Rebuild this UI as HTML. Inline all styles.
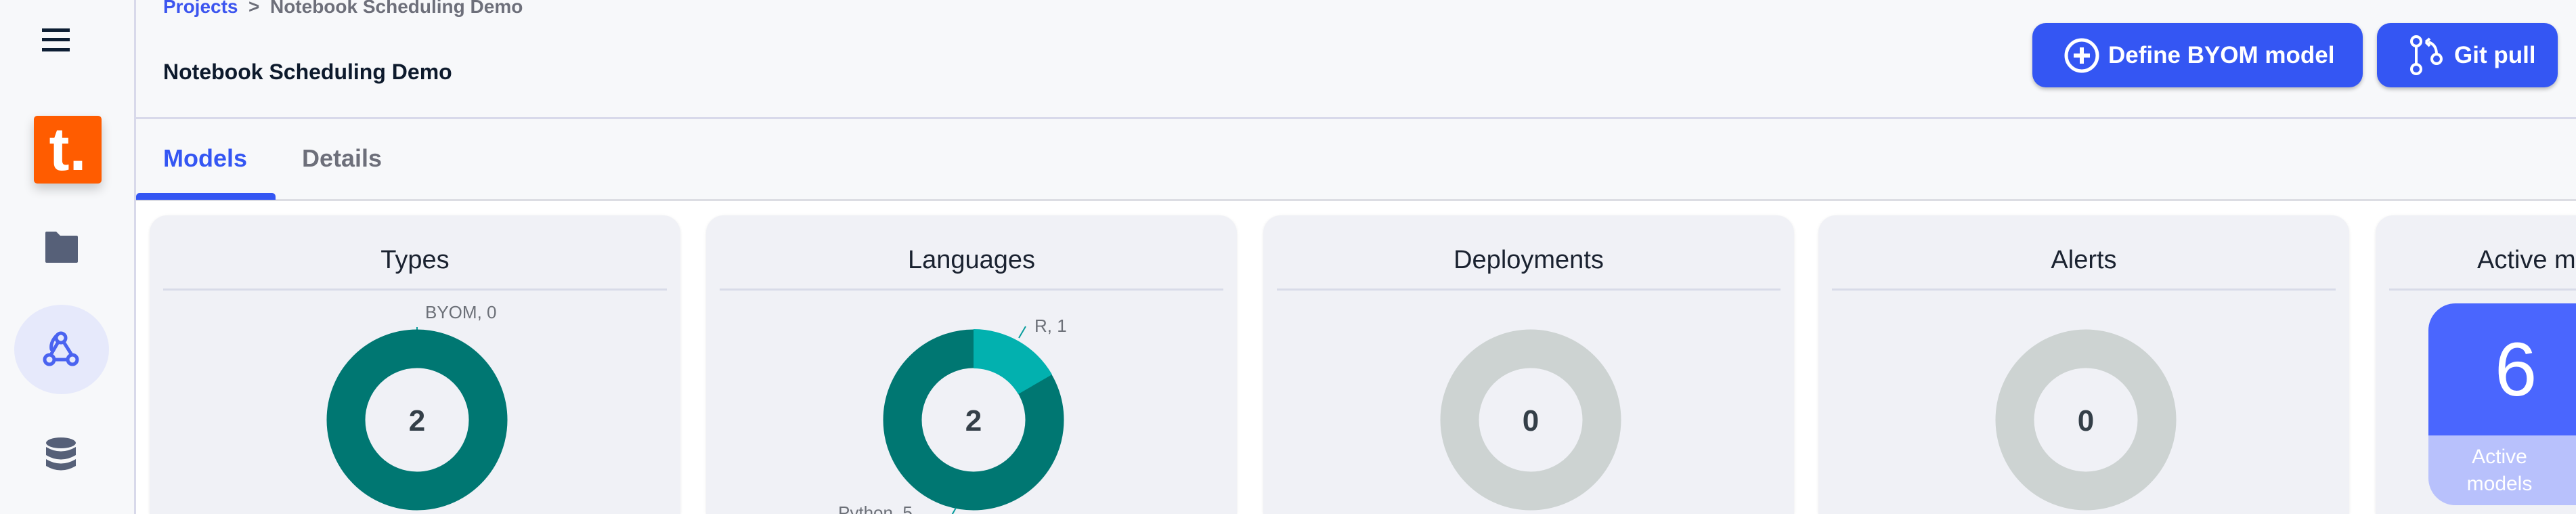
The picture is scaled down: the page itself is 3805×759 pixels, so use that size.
<!DOCTYPE html>
<html style="width:3805px;height:759px;overflow:hidden"><head><meta charset="utf-8"><style>
*{margin:0;padding:0;box-sizing:border-box}
body{width:3805px;height:759px;overflow:hidden;background:#f7f8fa;font-family:"Liberation Sans",sans-serif;position:relative}
.side{position:absolute;left:0;top:0;width:201px;height:759px;background:#f7f8fa;border-right:3px solid #d8d9ea;z-index:2}
.abs{position:absolute}
.hdrline{position:absolute;left:201px;right:0;top:173px;height:3px;background:#d8d9ea}
.tabline{position:absolute;left:201px;right:0;top:294px;height:3px;background:#dcdde3}
.content{position:absolute;left:201px;right:0;top:297px;height:462px;background:#fff}
.card{position:absolute;top:318px;width:784px;height:441px;background:#f0f1f6;border-radius:26px 26px 0 0;box-shadow:0 1px 4px rgba(0,0,0,.08);overflow:hidden}
.card h3{position:absolute;left:0;right:0;top:45px;text-align:center;font-weight:normal;font-size:38px;color:#1a2230;white-space:nowrap}
.card .dv{position:absolute;left:20px;right:20px;top:108px;height:3px;background:#d8dbe8}
.btn{position:absolute;top:34px;height:95px;background:#3456f3;border-radius:20px;color:#fff;font-size:35px;font-weight:bold;box-shadow:0 3px 6px rgba(0,0,0,.25);display:flex;align-items:center}
</style></head><body>
<div class="side">
 <div class="abs" style="left:62px;top:42px;width:41px;height:5px;background:#0d1e33"></div>
 <div class="abs" style="left:62px;top:56px;width:41px;height:5px;background:#0d1e33"></div>
 <div class="abs" style="left:62px;top:71px;width:41px;height:5px;background:#0d1e33"></div>
 <div class="abs" style="left:50px;top:171px;width:100px;height:100px;background:#ff5c00;border-radius:5px;box-shadow:0 8px 16px rgba(0,0,0,.2);color:#fff;font-weight:bold;font-size:90px;line-height:100px;text-align:center">t.</div>
 <svg class="abs" style="left:65px;top:340px" width="52" height="50" viewBox="0 0 52 50"><path d="M2 4 Q2 2 4 2 H18 L24 8 H48 Q50 8 50 10 V46 Q50 48 48 48 H4 Q2 48 2 46Z" fill="#566078"/></svg>
 <div class="abs" style="left:21px;top:450px;width:140px;height:132px;border-radius:50%;background:#e6e9fb"></div>
 <svg class="abs" style="left:62px;top:486px" width="56" height="58" viewBox="0 0 56 58" fill="none" stroke="#4a63f0" stroke-width="5" stroke-linecap="round"><circle cx="28" cy="13" r="7"/><circle cx="11" cy="45" r="7"/><circle cx="45" cy="45" r="7"/><path d="M24 19 L13 38 M21 10 Q12 20 14 30 M18 45 H38 M32 19 L44 38"/></svg>
 <svg class="abs" style="left:67px;top:645px" width="46" height="52" viewBox="0 0 46 52"><ellipse cx="23" cy="9" rx="22" ry="8" fill="#566078"/><path d="M1 15 Q23 28 45 15 V27 Q23 40 1 27Z" fill="#566078"/><path d="M1 33 Q23 46 45 33 V43 Q23 56 1 43Z" fill="#566078"/></svg>
</div>
<div class="abs" style="left:241px;top:-6px;font-size:28px;font-weight:bold;color:#3c55ef">Projects <span style="color:#6d6f7a;font-weight:bold">&nbsp;&gt;&nbsp; Notebook Scheduling Demo</span></div>
<div class="abs" style="left:241px;top:88px;font-size:32px;font-weight:bold;color:#0d1a2c">Notebook Scheduling Demo</div>
<div class="btn" style="left:3002px;width:488px"><svg style="margin-left:46px;margin-right:12px" width="54" height="54" viewBox="0 0 54 54" fill="none" stroke="#fff" stroke-width="5"><circle cx="27" cy="27" r="23"/><path d="M27 15V39M15 27H39" stroke-width="6"/></svg>Define BYOM model</div>
<div class="btn" style="left:3511px;width:267px"><svg style="margin-left:48px;margin-right:14px" width="52" height="60" viewBox="0 0 52 60" fill="none" stroke="#fff" stroke-width="4"><circle cx="10" cy="9" r="7"/><circle cx="10" cy="50" r="7"/><circle cx="40" cy="35" r="7"/><path d="M10 16V43M40 28 Q40 14 28 10 M24 10 L30 5 M24 10 L30 16"/></svg>Git pull</div>
<div class="hdrline"></div>
<div class="abs" style="left:241px;top:213px;font-size:36px;font-weight:bold;color:#3456f3">Models</div>
<div class="abs" style="left:446px;top:213px;font-size:36px;font-weight:bold;color:#6d6f7a">Details</div>
<div class="tabline"></div>
<div class="abs" style="left:201px;top:285px;width:206px;height:10px;background:#3456f3;border-radius:5px 5px 0 0"></div>
<div class="content"></div>

<div class="card" style="left:221px"><h3>Types</h3><div class="dv"></div>
<svg class="abs" style="left:0;top:0" width="784" height="460"><line x1="395" y1="165" x2="395" y2="190" stroke="#079c9c" stroke-width="2"/><text x="407" y="152" font-size="26" fill="#6c7078" font-family="Liberation Sans">BYOM, 0</text><circle cx="395" cy="302" r="105" fill="none" stroke="#007772" stroke-width="57"/><text x="395" y="318" font-size="44" font-weight="bold" fill="#343f48" text-anchor="middle" font-family="Liberation Sans">2</text></svg></div>

<div class="card" style="left:1043px"><h3>Languages</h3><div class="dv"></div>
<svg class="abs" style="left:0;top:0" width="784" height="460"><circle cx="395" cy="302" r="105" fill="none" stroke="#007772" stroke-width="57"/><path d="M395 168 A134 134 0 0 1 511 235 L461 264 A76 76 0 0 0 395 226Z" fill="#02b1af"/><line x1="462" y1="181" x2="472" y2="164" stroke="#079c9c" stroke-width="2"/><text x="485" y="172" font-size="26" fill="#6c7078" font-family="Liberation Sans">R, 1</text><line x1="369" y1="432" x2="361" y2="446" stroke="#079c9c" stroke-width="2"/><text x="195" y="448" font-size="26" fill="#6c7078" font-family="Liberation Sans">Python, 5</text><text x="395" y="318" font-size="44" font-weight="bold" fill="#343f48" text-anchor="middle" font-family="Liberation Sans">2</text></svg></div>

<div class="card" style="left:1866px"><h3>Deployments</h3><div class="dv"></div>
<svg class="abs" style="left:0;top:0" width="784" height="460"><circle cx="395" cy="302" r="105" fill="none" stroke="#cdd3d2" stroke-width="57"/><text x="395" y="318" font-size="44" font-weight="bold" fill="#343f48" text-anchor="middle" font-family="Liberation Sans">0</text></svg></div>

<div class="card" style="left:2686px"><h3>Alerts</h3><div class="dv"></div>
<svg class="abs" style="left:0;top:0" width="784" height="460"><circle cx="395" cy="302" r="105" fill="none" stroke="#cdd3d2" stroke-width="57"/><text x="395" y="318" font-size="44" font-weight="bold" fill="#343f48" text-anchor="middle" font-family="Liberation Sans">0</text></svg></div>

<div class="card" style="left:3509px"><h3 style="text-align:left;left:150px;right:auto">Active models</h3><div class="dv"></div>
<div class="abs" style="left:78px;top:130px;width:300px;height:298px;border-radius:40px;overflow:hidden;background:#b8c1fc">
<div style="height:195px;background:#4a66fe;color:#fff;font-size:112px;text-align:left;padding-left:98px;line-height:195px">6</div>
<div style="color:#fff;font-size:30px;padding-top:12px;line-height:40px;width:210px;text-align:center">Active<br>models</div>
</div></div>
</body></html>
